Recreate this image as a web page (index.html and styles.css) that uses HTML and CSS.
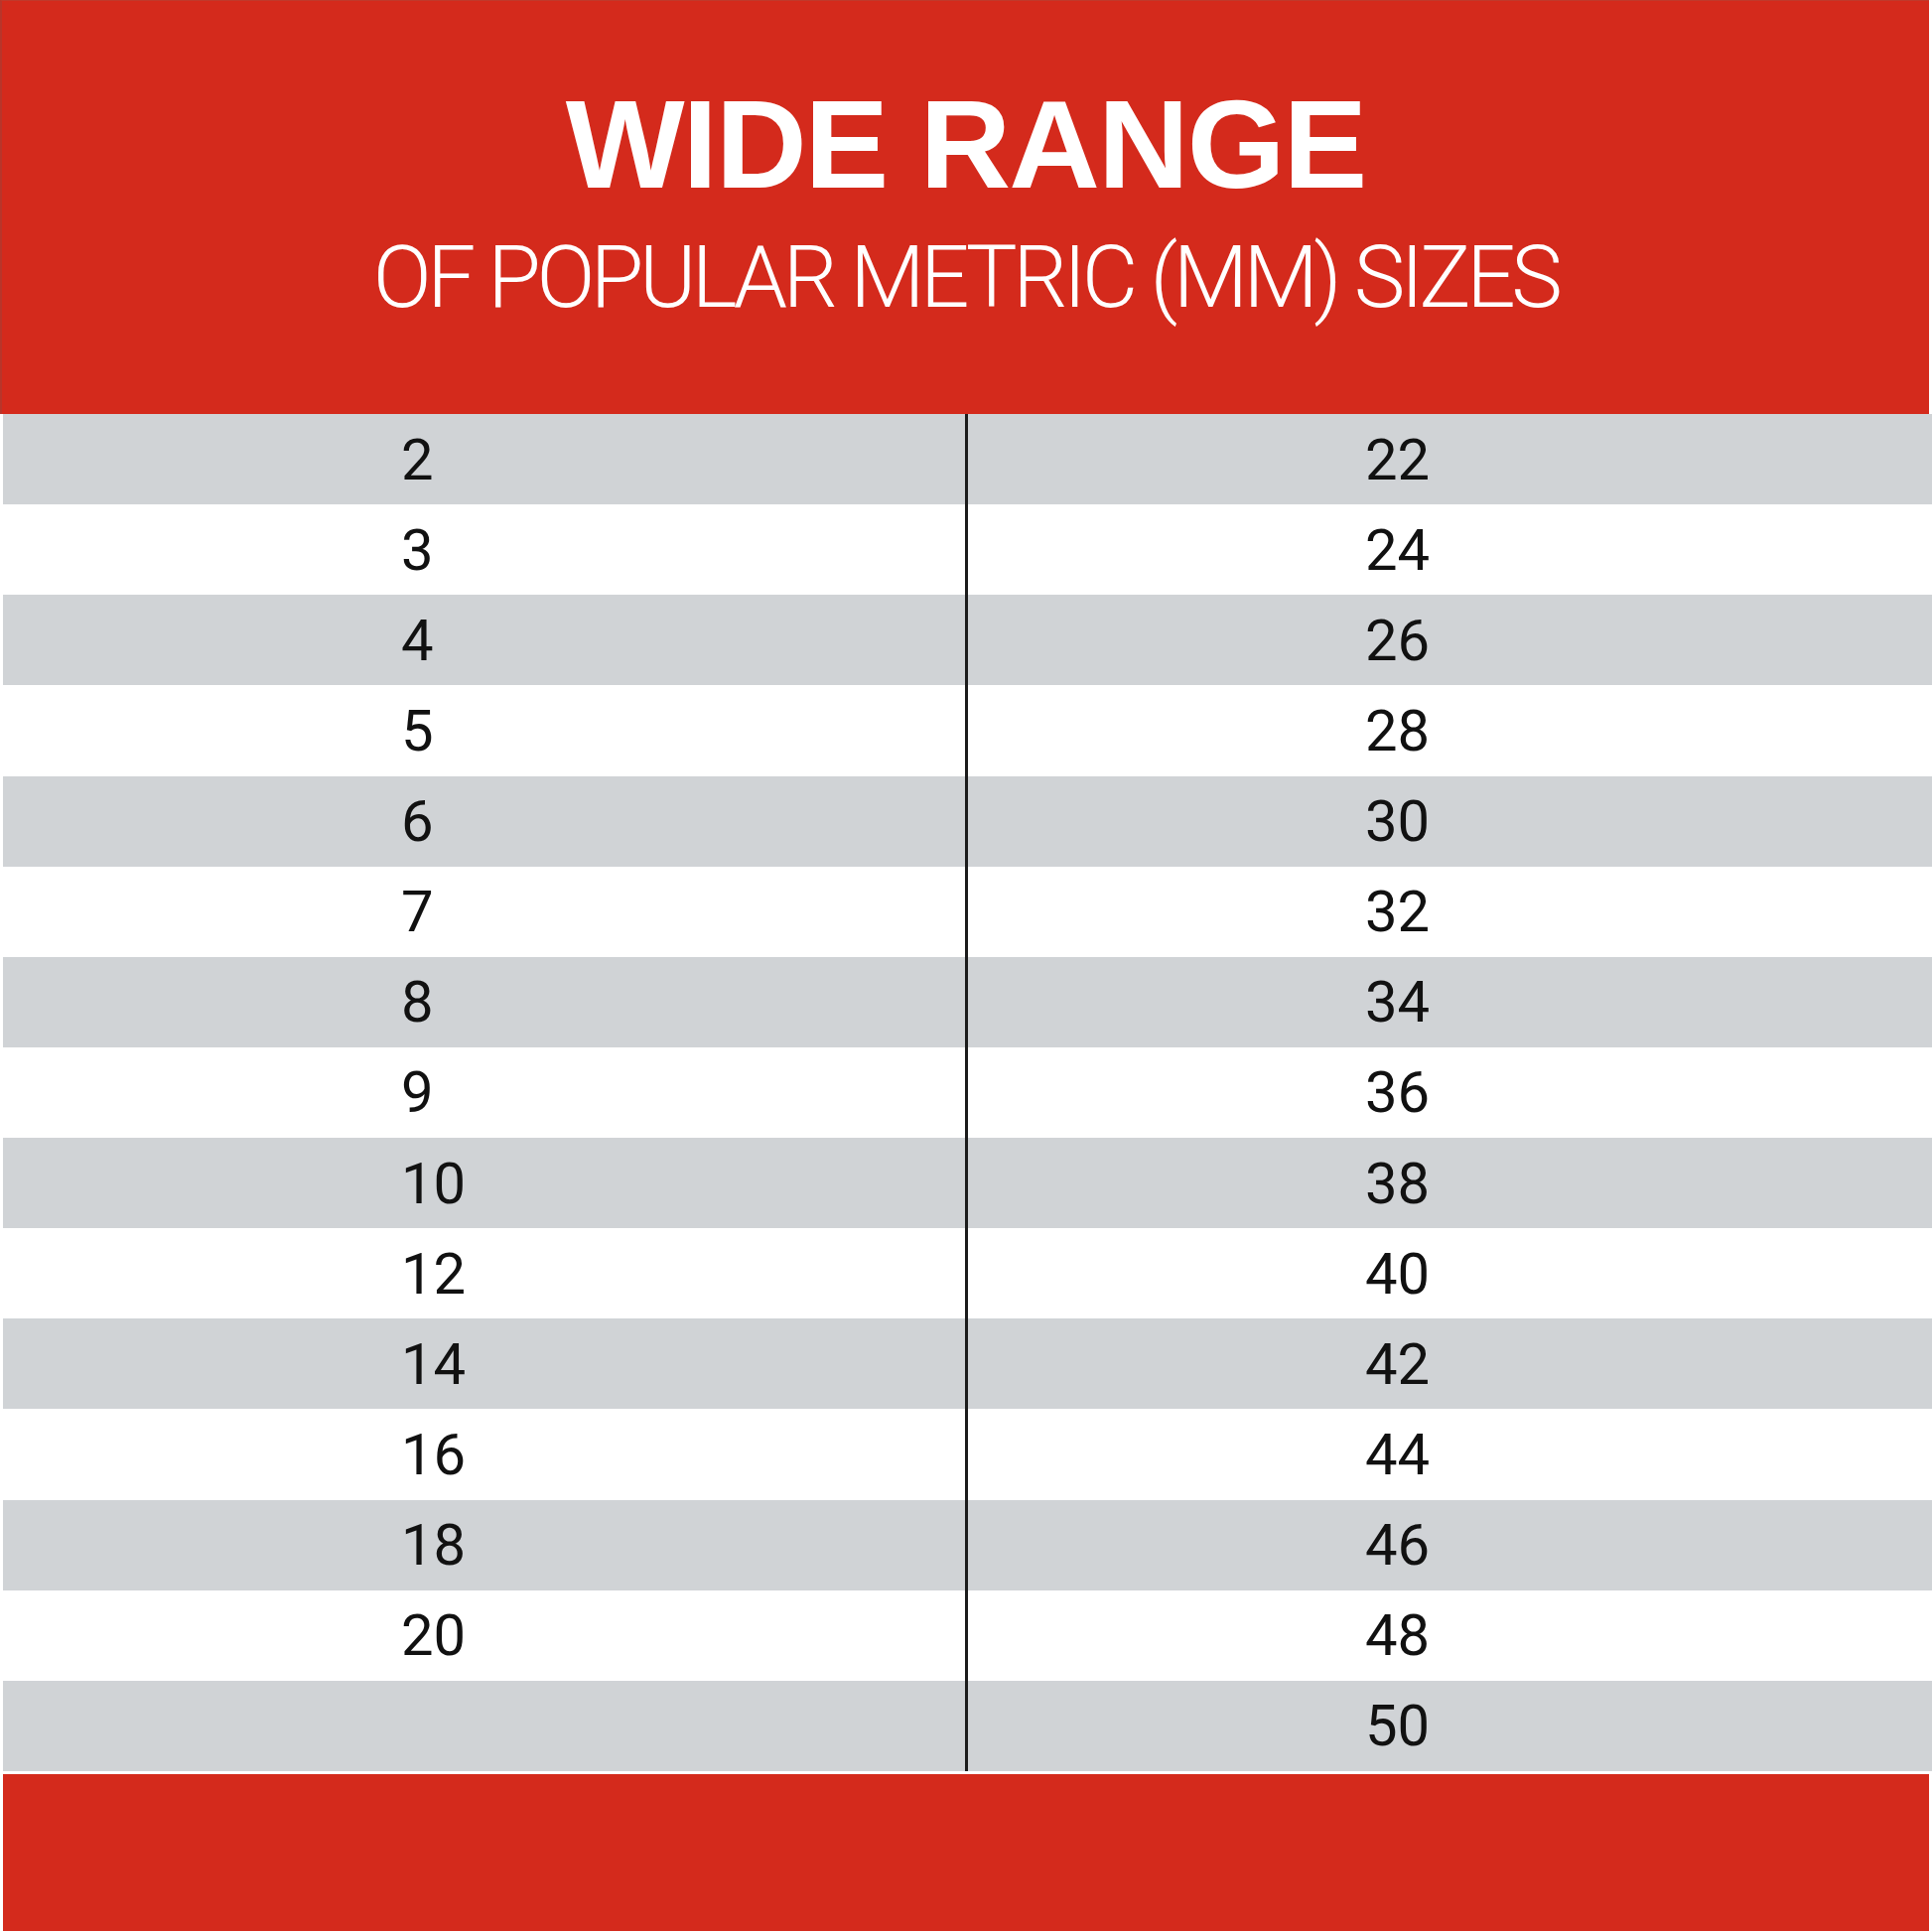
FILE: index.html
```html
<!DOCTYPE html>
<html lang="en">
<head>
<meta charset="utf-8">
<title>Wide Range of Popular Metric (MM) Sizes</title>
<link rel="stylesheet" href="styles.css">
</head>
<body>
<div class="sheet">
  <header class="banner">
    <h1 class="title">WIDE RANGE</h1>
    <p class="subtitle">OF POPULAR METRIC (MM) SIZES</p>
  </header>
  <div class="table">
    <div class="row shade"><div class="cell left">2</div><div class="cell right">22</div></div>
    <div class="row"><div class="cell left">3</div><div class="cell right">24</div></div>
    <div class="row shade"><div class="cell left">4</div><div class="cell right">26</div></div>
    <div class="row"><div class="cell left">5</div><div class="cell right">28</div></div>
    <div class="row shade"><div class="cell left">6</div><div class="cell right">30</div></div>
    <div class="row"><div class="cell left">7</div><div class="cell right">32</div></div>
    <div class="row shade"><div class="cell left">8</div><div class="cell right">34</div></div>
    <div class="row"><div class="cell left">9</div><div class="cell right">36</div></div>
    <div class="row shade"><div class="cell left">10</div><div class="cell right">38</div></div>
    <div class="row"><div class="cell left">12</div><div class="cell right">40</div></div>
    <div class="row shade"><div class="cell left">14</div><div class="cell right">42</div></div>
    <div class="row"><div class="cell left">16</div><div class="cell right">44</div></div>
    <div class="row shade"><div class="cell left">18</div><div class="cell right">46</div></div>
    <div class="row"><div class="cell left">20</div><div class="cell right">48</div></div>
    <div class="row shade"><div class="cell left"></div><div class="cell right">50</div></div>
  </div>
  <footer class="base"></footer>
</div>
</body>
</html>
```

FILE: styles.css
```css
html, body {
  margin: 0;
  padding: 0;
  background: #ffffff;
}

.sheet {
  width: 1946px;
  height: 1946px;
  display: flex;
  flex-direction: column;
  background: #ffffff;
}

.banner {
  box-sizing: border-box;
  height: 417px;
  margin-right: 3px;
  background: #d42a1c;
  border-top: 1px solid #c0392b;
  border-left: 2px solid #b9352a;
  display: flex;
  flex-direction: column;
  align-items: center;
  padding-top: 81px;
  color: #ffffff;
}

.title {
  margin: 0;
  font-family: "Liberation Sans", Arial, sans-serif;
  font-weight: 700;
  font-size: 127px;
  line-height: 1;
  letter-spacing: -2px;
}

.subtitle {
  margin: 27px 0 0 0;
  font-family: Roboto, "Liberation Sans", sans-serif;
  font-weight: 300;
  font-size: 87px;
  line-height: 1;
  letter-spacing: -4.5px;
}

.table {
  height: 1367px;
  margin-left: 3px;
  display: grid;
  grid-template-rows: repeat(15, 1fr);
}

.row {
  display: grid;
  grid-template-columns: 972px 1fr;
  background: #ffffff;
}

.row.shade {
  background: #d0d3d6;
}

.cell {
  display: flex;
  align-items: center;
  font-family: Roboto, "Liberation Sans", sans-serif;
  font-weight: 400;
  font-size: 58px;
  color: #111111;
}

.cell.left {
  padding-left: 401px;
  border-right: 3px solid #1c1c1c;
}

.cell.right {
  padding-left: 400px;
}

.base {
  height: 158px;
  margin: 3px 3px 0 3px;
  background: #d42a1c;
}
```
